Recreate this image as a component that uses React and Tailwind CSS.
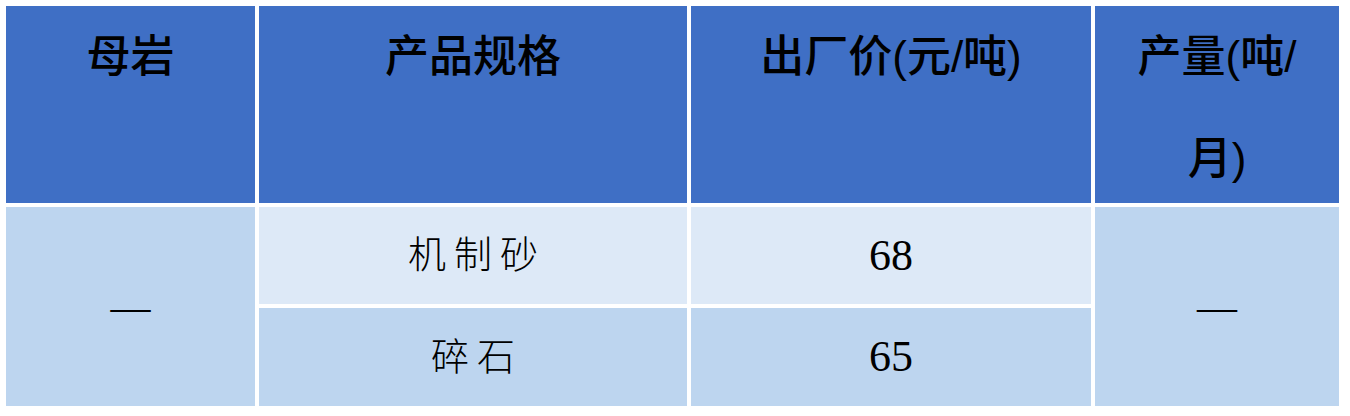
import React from 'react';

const head = 'bg-[#3f6fc5] text-black text-center text-[44px] leading-[102px] font-medium';
const sans = { fontFamily: '"Liberation Sans", "Noto Sans CJK SC", sans-serif' };

const App = () => (
    <div className="w-[1350px] h-[416px] bg-white pt-[6px] pl-[6px]">
        <div className="grid grid-cols-[249px_428px_400px_244px] grid-rows-[197px_97px_98px] gap-[4px]" style={sans}>
            <div className={head}>母岩</div>
            <div className={head}>产品规格</div>
            <div className={head}>出厂价(元/吨)</div>
            <div className={head}>
                产量(吨/
                <br />
                月)
            </div>

            <div className="row-span-2 bg-[#bdd5ef] flex items-center justify-center">
                <span className="text-[40px] leading-none text-black" style={{ fontFamily: '"Liberation Serif", serif' }}>—</span>
            </div>
            <div className="bg-[#dde9f7] flex items-center justify-center">
                <span className="text-[38px] tracking-[8px] pl-[8px] font-light text-black">机制砂</span>
            </div>
            <div className="bg-[#dde9f7] flex items-center justify-center">
                <span className="text-[44px] text-black" style={{ fontFamily: '"Liberation Serif", serif' }}>68</span>
            </div>
            <div className="row-span-2 bg-[#bdd5ef] flex items-center justify-center">
                <span className="text-[40px] leading-none text-black" style={{ fontFamily: '"Liberation Serif", serif' }}>—</span>
            </div>

            <div className="bg-[#bdd5ef] flex items-center justify-center">
                <span className="text-[38px] tracking-[8px] pl-[8px] font-light text-black">碎石</span>
            </div>
            <div className="bg-[#bdd5ef] flex items-center justify-center">
                <span className="text-[44px] text-black" style={{ fontFamily: '"Liberation Serif", serif' }}>65</span>
            </div>
        </div>
    </div>
);

export default App;
